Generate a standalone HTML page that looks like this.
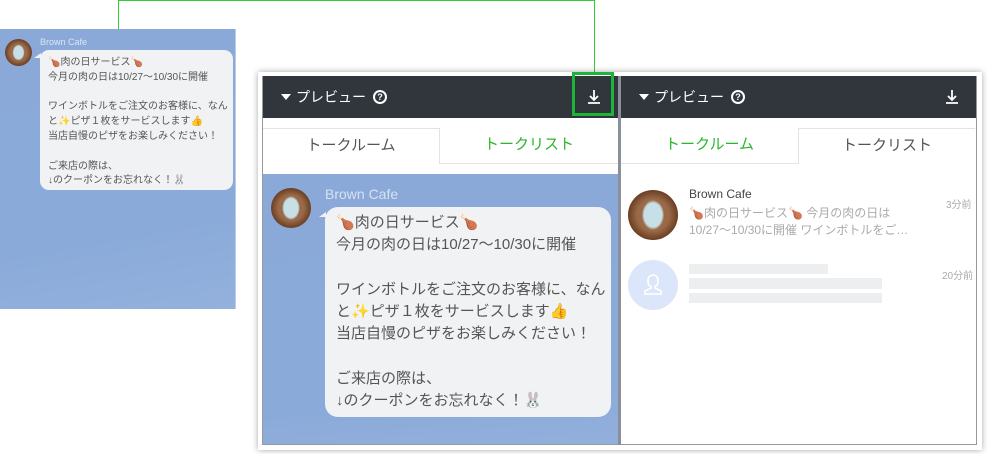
<!DOCTYPE html>
<html><head><meta charset="utf-8"><style>
*{margin:0;padding:0;box-sizing:border-box}
body{width:1000px;height:454px;background:#fff;position:relative;overflow:hidden;font-family:"Liberation Sans","Noto Sans CJK JP",sans-serif}
.a{position:absolute}
.av{position:absolute;border-radius:50%;background:radial-gradient(ellipse 30% 40% at 50% 50%,#c7dfe6 0 60%,transparent 75%),radial-gradient(circle at 50% 50%,#9a6a48 0 45%,#6b3f24 70%,#3a2212 100%)}
.bub{position:absolute;background:#f1f2f4;color:#555;white-space:nowrap}
.tail{position:absolute;width:0;height:0;border-top:5px solid transparent;border-right:7px solid #f1f2f4}
.em{display:inline-block;color:#e8a020}
.hdr{position:absolute;top:76px;height:42px;background:#31363d;color:#fff;font-size:14px}
.tri{position:absolute;left:18px;top:18px;width:0;height:0;border-left:5px solid transparent;border-right:5px solid transparent;border-top:6px solid #fff}
.q{position:absolute;left:110px;top:14px;width:14px;height:14px;border:2px solid #fff;border-radius:50%;font-size:9px;line-height:10px;text-align:center;font-weight:bold}
.tab{position:absolute;top:128px;height:36px;font-size:15px;text-align:center;line-height:34px}
.sk{position:absolute;background:#eceef0}
</style></head><body>
<div class="a" style="left:118px;top:0;width:1px;height:29px;background:#3c3"></div>
<div class="a" style="left:118px;top:0;width:477px;height:1px;background:#3c3"></div>
<div class="a" style="left:594px;top:0;width:1px;height:73px;background:#3c3"></div>

<div class="a" style="left:0;top:29px;width:236px;height:280px;background:linear-gradient(170deg,#8aa9d9 0%,#8aaad9 70%,#94b1dc 100%);border-right:1px solid #b9cde8"></div>
<div class="av" style="left:5px;top:39px;width:27px;height:27px"></div>
<div class="a" style="left:40px;top:37px;font-size:9px;color:#dbe4f4">Brown Cafe</div>
<div class="tail" style="left:34px;top:53px"></div>
<div class="bub" style="left:40px;top:50px;width:193px;height:140px;border-radius:9px;font-size:10px;line-height:14.8px;padding:6px 0 0 8px">
<span class="em">🍗</span>肉の日サービス<span class="em">🍗</span><br>今月の肉の日は10/27〜10/30に開催<br><br>ワインボトルをご注文のお客様に、なん<br>と<span class="em">✨</span>ピザ１枚をサービスします👍<br>当店自慢のピザをお楽しみください！<br><br>ご来店の際は、<br>↓のクーポンをお忘れなく！🐰</div>

<div class="a" style="left:258px;top:72px;width:724px;height:378px;box-shadow:0 0 6px rgba(0,0,0,.35);background:#fff"></div>
<div class="a" style="left:262px;top:76px;width:715px;height:369px;border:1px solid #999;background:#fff"></div>

<div class="hdr" style="left:263px;width:355px">
 <span class="tri"></span>
 <span class="a" style="left:33px;top:11px">プレビュー</span>
 <span class="q">?</span>
 <svg class="a" style="left:324px;top:13px" width="14" height="16" viewBox="0 0 14 16"><path d="M7 1v10M3 7l4 4 4-4M1 14h12" fill="none" stroke="#fff" stroke-width="1.8"/></svg>
</div>
<div class="a" style="left:572px;top:72px;width:42px;height:44px;border:3px solid #1db43a"></div>
<div class="tab" style="left:263px;width:177px;border-top:1px solid #e3e3e3;border-right:1px solid #e3e3e3;color:#555">トークルーム</div>
<div class="tab" style="left:440px;width:178px;border-bottom:1px solid #e3e3e3;color:#2bb52b">トークリスト</div>
<div class="a" style="left:263px;top:174px;width:355px;height:270px;background:linear-gradient(175deg,#8aa9d9 0%,#8aaad9 80%,#93b0dc 100%)"></div>
<div class="av" style="left:271px;top:188px;width:40px;height:40px"></div>
<div class="a" style="left:325px;top:186px;font-size:14px;color:#d7e1f2">Brown Cafe</div>
<div class="tail" style="left:319px;top:212px"></div>
<div class="bub" style="left:325px;top:207px;width:286px;height:210px;border-radius:13px;font-size:15px;line-height:22.3px;padding:5px 0 0 11px">
<span class="em">🍗</span>肉の日サービス<span class="em">🍗</span><br>今月の肉の日は10/27〜10/30に開催<br><br>ワインボトルをご注文のお客様に、なん<br>と<span class="em">✨</span>ピザ１枚をサービスします👍<br>当店自慢のピザをお楽しみください！<br><br>ご来店の際は、<br>↓のクーポンをお忘れなく！🐰</div>
<div class="a" style="left:618px;top:76px;width:3px;height:369px;background:#8a8f99"></div>

<div class="hdr" style="left:621px;width:355px">
 <span class="tri"></span>
 <span class="a" style="left:33px;top:11px">プレビュー</span>
 <span class="q">?</span>
 <svg class="a" style="left:324px;top:13px" width="14" height="16" viewBox="0 0 14 16"><path d="M7 1v10M3 7l4 4 4-4M1 14h12" fill="none" stroke="#fff" stroke-width="1.8"/></svg>
</div>
<div class="tab" style="left:621px;width:177px;border-bottom:1px solid #e3e3e3;color:#2bb52b">トークルーム</div>
<div class="tab" style="left:798px;width:177px;border-top:1px solid #e3e3e3;border-left:1px solid #e3e3e3;color:#555">トークリスト</div>
<div class="av" style="left:628px;top:190px;width:50px;height:50px"></div>
<div class="a" style="left:689px;top:187px;font-size:12px;color:#444">Brown Cafe</div>
<div class="a" style="left:689px;top:205px;font-size:12px;line-height:17px;color:#aaa;white-space:nowrap"><span class="em">🍗</span>肉の日サービス<span class="em">🍗</span> 今月の肉の日は<br>10/27〜10/30に開催 ワインボトルをご…</div>
<div class="a" style="left:946px;top:196px;font-size:10px;color:#aaa">3分前</div>
<div class="a" style="left:628px;top:260px;width:50px;height:50px;border-radius:50%;background:#dbe6fb"></div>
<svg class="a" style="left:643px;top:273px" width="20" height="24" viewBox="0 0 20 24"><path d="M10 2a5 5 0 0 1 5 5v2a5 5 0 0 1-3 4.5v1.5l6 3v3H2v-3l6-3v-1.5A5 5 0 0 1 5 9V7a5 5 0 0 1 5-5z" fill="none" stroke="#fff" stroke-width="1.6"/></svg>
<div class="sk" style="left:689px;top:264px;width:139px;height:10px"></div>
<div class="sk" style="left:689px;top:278px;width:193px;height:11px"></div>
<div class="sk" style="left:689px;top:293px;width:193px;height:10px"></div>
<div class="a" style="left:942px;top:267px;font-size:10px;color:#aaa">20分前</div>
</body></html>
